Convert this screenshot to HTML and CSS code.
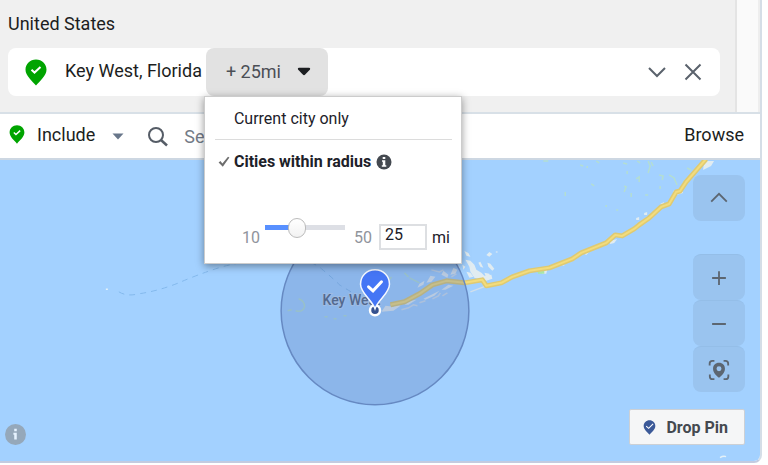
FILE: index.html
```html
<!DOCTYPE html>
<html lang="en">
<head>
<meta charset="utf-8">
<title>Location targeting</title>
<link rel="stylesheet" href="styles.css">
</head>
<body>
<main class="picker">
  <section class="locations">
    <div class="locations-list">
      <h2 class="country">United States</h2>
      <div class="location">
        <svg class="location-pin" viewBox="0 0 22 27" aria-hidden="true"><path fill="#00a400" d="M11 .5C5 .5.5 5 .5 10.700c0 6 6.500 11 10.500 15.800 4-4.800 10.500-9.800 10.500-15.800C21.500 5 17 .5 11 .5z"/><path class="tick" d="M6.500 10.800l3 2.800 6-5.600"/></svg>
        <span class="location-name">Key West, Florida</span>
        <div class="radius">
          <button class="radius-button" type="button" aria-expanded="true">+ 25mi
            <svg class="radius-caret" viewBox="0 0 14 9" aria-hidden="true"><path d="M2 .8h10c1.200 0 1.500 1.200.8 2L8.200 7.600c-.7.700-1.700.7-2.400 0L1.200 2.800C.5 2 .8.800 2 .8z"/></svg>
          </button>
          <div class="menu">
            <button class="menu-item" type="button">Current city only</button>
            <div class="menu-item menu-selected">
              <svg class="menu-tick" viewBox="0 0 12 12" aria-hidden="true"><path d="M.6 6.400L2.400 5l2 2.600L10 .8l1.400.8-6.600 9.200z"/></svg>
              <span>Cities within radius</span>
              <svg class="menu-info" viewBox="0 0 16 16" aria-hidden="true"><circle cx="8" cy="8" r="7.500" fill="#444950"/><path fill="#fff" d="M6.700 3h2.600v2H6.700zM6 6.300h3.300v5h1v1.500H5.800v-1.500h1V7.800H6z"/></svg>
            </div>
            <div class="range">
              <span class="range-end">10</span>
              <input class="slider" type="range" min="10" max="50" value="25" aria-label="Radius">
              <span class="range-end range-max">50</span>
              <input class="range-value" id="miles" type="text" value="25">
              <label class="range-unit" for="miles">mi</label>
            </div>
          </div>
        </div>
        <div class="location-actions">
          <button class="icon-button" type="button" aria-label="Expand"><svg viewBox="0 0 20 20"><path d="M2 6l8 8 8-8"/></svg></button>
          <button class="icon-button" type="button" aria-label="Remove"><svg viewBox="0 0 20 20"><path d="M2.500 2.500l15 15M17.500 2.500l-15 15"/></svg></button>
        </div>
      </div>
    </div>
    <div class="gutter"></div>
  </section>

  <section class="search">
    <button class="include" type="button">
      <svg class="include-pin" viewBox="0 0 22 27" aria-hidden="true"><path fill="#00a400" d="M11 .5C5 .5.5 5 .5 10.700c0 6 6.500 11 10.500 15.800 4-4.800 10.500-9.800 10.500-15.800C21.500 5 17 .5 11 .5z"/><path class="tick" d="M6.500 10.800l3 2.800 6-5.600"/></svg>
      Include
      <svg class="include-caret" viewBox="0 0 12 7" aria-hidden="true"><path d="M.5.500h11L6 6.500z"/></svg>
    </button>
    <svg class="lens" viewBox="0 0 22 22" aria-hidden="true"><circle cx="9" cy="9" r="7"/><path stroke-width="2.500" d="M14 14l6 5.500"/></svg>
    <input class="search-box" type="text" placeholder="Search locations" aria-label="Search locations">
    <a class="browse" href="#">Browse</a>
  </section>

  <section class="map">
    <svg class="map-art" viewBox="0 159 761 303" preserveAspectRatio="xMinYMin slice" role="img" aria-label="Map of Key West">
      <path class="ferry" d="M119 291q8 5 20 2 20-3 40-11 18-8 43-16 40-10 67-8 25 2 33 10 12 10 18 16 8 5 15 9"/>
      <path class="speck" d="M106 288.500h2M721 457q3-2 6-1"/>
      <g class="sand">
        <path d="M465 250l4 2 2 4-4-1zM466 259l5 1 4 4 2 5 5 3 3 3 7-1 1 4-6 2-5-1-7-2-4-6-1-5zM487 254l3-3 3 2-3 3zM488 262l3 1 4 5-2 2-4-4zM479 262l2-1 3 6-3-1zM463 264l3 2-2 3zM467 271l4 1 3 4-4 1zM485 272l5 1 1 3-4 1zM496 251l2-1v2zM454 267l4 2-2 4-5 1zM444 270l5 4-1 3-6-3zM431 275l5 1-4 5-5 1zM420 283l5-3-1 4-6 3z"/>
        <path d="M386 305l8 1 3-3 4 2-7 5-12 1zM405 304l6-4 6-1-8 5zM424 298l8-4 8-4-5 5-9 4zM442 289l7-5 5 1-8 4z"/>
        <path d="M542 270l6-1-1 4h-4zM560 264l5-2v3zM584 252l6-1-3 3zM610 240l8-2-3 4-4 1zM637 217l3-1v3h-3zM645 212l3-1v3h-3zM674 190l8-2 2 4-7 2zM661 203l4-2-1 4zM705 160h10l-3 5-8 4z"/>
      </g>
      <path class="sand-lines" d="M402 309l7-2 5-3 4 1M420 302l6-2M433 298l6-3 2-3M443 295l5-3M375 279l3-2M432 269l8 2 4-2M452 276l5-3M457 263l3 4M471 291l16-6"/>
      <g class="reef">
        <path d="M299 298q6 2 6 8-2 6-9 4M288 310l4-1M325 316h3M334 318h3M344 315h3M385 287l-8 8M390 279l2-3M405 272l4 4M410 277l10 5"/>
        <path d="M544 160h5M566 191v4M581 164l3 1M588 165v2M597 160l3 2M592 183l3 2M624 162l4 1M628 170v3M638 160l3 2M649 160l2 5-2 7M652 161l2 4M637 178l3-2v5M625 185l2 1-2 5M632 192v4M646 194h3M660 174l4 1-1 4M670 174l5 3 3 7M661 185v3M688 167l4 2M684 180l2 2M694 179l4 1M607 204v2M617 209h2"/>
      </g>
      <path fill="#a9e6a8" d="M538 271l7-1v3h-6z"/>
      <path class="road-edge" d="M391 304l14-3 15-8 13-9 14-4 18 2 18-3 4 6 15-3 11-6 17-6 20-3 23-9 9-6 25-10 9-8 7 1 12-7 5-4 10-7 12-11 8-3 7-12 4-1 6-9 20-23"/>
      <path class="road" d="M391 304l14-3 15-8 13-9 14-4 18 2 18-3 4 6 15-3 11-6 17-6 20-3 23-9 9-6 25-10 9-8 7 1 12-7 5-4 10-7 12-11 8-3 7-12 4-1 6-9 20-23"/>
      <text class="place" x="323" y="304">Key West</text>
      <circle class="reach" cx="375.500" cy="310" r="94"/>
      <circle cx="375.500" cy="309.500" r="5" fill="#35518f" stroke="#fff" stroke-width="2.500"/>
      <path fill="#4576f5" stroke="#f4f8ff" stroke-width="1.500" d="M375.500 269c-8.500 0-14.500 6.500-14.500 14.500 0 9 11 15 14.500 24.500C379 298.500 390 292.500 390 283.500c0-8-6-14.500-14.500-14.500z"/>
      <path class="pin-tick" d="M369 286l4.500 4 8.500-9"/>
    </svg>
    <button class="map-info" type="button" aria-label="Map information"><svg viewBox="0 0 20 20"><circle cx="10" cy="10" r="10" fill="#95a8ba"/><path fill="#e6f3ff" d="M8.800 4.600h2.400v2.300H8.800zM8 8.300h3.200v6.500H8.800v-4.600H8z"/></svg></button>
    <div class="map-tools">
      <button class="map-button map-up" type="button" aria-label="Collapse map"><svg viewBox="0 0 24 24"><path d="M3.500 16L12 7.500l8.500 8.500"/></svg></button>
      <button class="map-button" type="button" aria-label="Zoom in"><svg viewBox="0 0 24 24"><path d="M4.500 12h15M12 4.500v15"/></svg></button>
      <button class="map-button" type="button" aria-label="Zoom out"><svg viewBox="0 0 24 24"><path d="M4.500 12h15"/></svg></button>
      <button class="map-button" type="button" aria-label="Locate"><svg viewBox="0 0 24 24"><path class="frame" d="M1.800 7V5q0-3 3-3H7M17 2h2q3 0 3 3v2M22.200 17v2q0 3-3 3H17M7 22H5q-3 0-3-3v-2"/><path class="marker" fill-rule="evenodd" d="M12 4c-4 0-6.500 2.800-6.500 6.500C5.500 15 9 18 12 20.500c3-2.500 6.500-5.500 6.500-10C18.500 6.800 16 4 12 4zm0 4a2.700 2.700 0 1 1 0 5.400A2.700 2.700 0 0 1 12 8z"/></svg></button>
      <button class="drop-pin" type="button"><svg class="drop-icon" viewBox="0 0 22 27" aria-hidden="true"><path fill="#3b5998" d="M11 .5C5 .5.5 5 .5 10.700c0 6 6.500 11 10.500 15.800 4-4.800 10.500-9.800 10.500-15.800C21.500 5 17 .5 11 .5z"/><path class="tick" d="M5 11l4.500 4 8-8"/></svg>Drop Pin</button>
    </div>
  </section>
</main>
</body>
</html>
```
FILE: styles.css
```css
* { box-sizing: border-box; }

body {
  margin: 0;
  background: #fff;
  color: #1c1e21;
  font-family: Roboto, "Liberation Sans", sans-serif;
  font-size: 18px;
}

button, input {
  margin: 0;
  padding: 0;
  border: 0;
  background: none;
  color: inherit;
  font: inherit;
}

svg { display: block; }

.tick {
  fill: none;
  stroke: #fff;
  stroke-width: 2;
}

.picker {
  display: flex;
  flex-direction: column;
  min-height: calc(100vh - 2px);
  margin-right: 6px;
  border-right: 2px solid #d5dee7;
  border-bottom: 2px solid #c3cbe0;
  border-radius: 0 0 8px 0;
}

.locations {
  display: flex;
  border-bottom: 2px solid #d8e0e7;
}

.locations-list {
  flex: 1;
  padding: 12px 15px 16px 8px;
  background: #f0f0f0;
}

.gutter {
  width: 25px;
  border-left: 2px solid #e4e4e4;
  border-right: 2px solid #eee;
  background: #fafafa;
}

.country {
  margin: 0 0 12px;
  font-size: 18px;
  font-weight: 400;
  line-height: 24px;
}

.location {
  display: flex;
  align-items: center;
  height: 48px;
  padding-left: 17px;
  border-radius: 8px;
  background: #fff;
}

.location-pin {
  width: 22px;
  height: 27px;
}

.location-name {
  padding: 0 4px 3px 18px;
  white-space: nowrap;
}

.radius { position: relative; }

.radius-button {
  display: flex;
  align-items: center;
  gap: 16px;
  height: 48px;
  padding: 0 17px 1px 20px;
  border-radius: 8px;
  background: #e2e2e2;
  color: #4b4f56;
  white-space: nowrap;
}

.radius-caret {
  width: 14px;
  height: 9px;
  fill: #1c1e21;
}

.menu {
  position: absolute;
  z-index: 2;
  top: 48px;
  left: -2px;
  width: 258px;
  height: 168px;
  padding: 0 9px 0 10px;
  border: 1px solid #ccc;
  background: #fff;
  box-shadow: 0 2px 8px rgba(0, 0, 0, .4);
  color: #1d2129;
  font-size: 16px;
}

.menu-item {
  display: flex;
  align-items: center;
  width: 100%;
  height: 43px;
  padding-left: 19px;
  border-bottom: 1px solid #dcdcdc;
}

.menu-selected {
  padding-left: 3px;
  border-bottom: 0;
  font-weight: 700;
  white-space: nowrap;
}

.menu-tick {
  width: 12px;
  height: 12px;
  margin-right: 4px;
  fill: #6d6d6d;
}

.menu-info {
  width: 16px;
  height: 16px;
  margin-left: 5px;
}

.range {
  display: flex;
  align-items: flex-end;
  margin-top: 34px;
  padding-left: 27px;
  line-height: 24px;
}

.range-end { color: #90949c; }

.slider {
  appearance: none;
  width: 80px;
  height: 20px;
  margin: 0 9px 13px 5px;
}

.slider::-webkit-slider-runnable-track {
  height: 5px;
  background: linear-gradient(to right, #5890ff 40%, #dddfe5 40%);
}

.slider::-webkit-slider-thumb {
  appearance: none;
  width: 18px;
  height: 20px;
  margin-top: -7px;
  border: 1px solid #bbb;
  border-radius: 9px;
  background: linear-gradient(#fff, #f2f2f2);
}

.range-value {
  width: 48px;
  height: 26px;
  margin: 0 5px 0 7px;
  padding: 0 4px 6px;
  border: 2px solid #dddfe2;
}

.location-actions {
  display: flex;
  gap: 16px;
  margin-left: auto;
  padding-right: 17px;
}

.icon-button svg {
  width: 20px;
  height: 20px;
  fill: none;
  stroke: #5a626c;
  stroke-width: 2;
}

.search {
  display: flex;
  align-items: center;
  height: 46px;
  padding: 0 16px 3px 8px;
  border-bottom: 2px solid #cdd7e2;
}

.include {
  display: flex;
  align-items: center;
}

.include-pin {
  width: 18px;
  height: 19px;
  margin-right: 11px;
}

.include-caret {
  width: 12px;
  height: 7px;
  margin: 3px 0 0 17px;
  fill: #68768a;
}

.lens {
  width: 22px;
  height: 22px;
  margin: 4px 15px 0 23px;
  fill: none;
  stroke: #555c66;
  stroke-width: 2;
}

.search-box {
  flex: 1;
  min-width: 0;
  padding-top: 4px;
}

.search-box::placeholder {
  color: #737b87;
  opacity: 1;
}

.browse {
  color: inherit;
  text-decoration: none;
}

.map {
  position: relative;
  display: flex;
  flex: 1;
  align-items: flex-end;
  justify-content: space-between;
  padding: 15px 15px 16px 5px;
  border-radius: 0 0 6px 0;
  background: #a3d1ff;
  overflow: hidden;
}

.map-art {
  position: absolute;
  inset: 0;
  width: 100%;
  height: 100%;
}

.ferry {
  fill: none;
  stroke: #84b9ec;
  stroke-dasharray: 6 5;
}

.speck {
  fill: none;
  stroke: #e4f1f8;
  stroke-width: 1.5;
}

.sand { fill: #e1ecf1; }

.sand-lines {
  fill: none;
  stroke: #d0dfec;
  stroke-width: 1.5;
}

.reef {
  fill: none;
  stroke: #b4ded2;
  stroke-width: 1.5;
}

.road-edge {
  fill: none;
  stroke: #dfca72;
  stroke-width: 5;
  stroke-linejoin: round;
}

.road {
  fill: none;
  stroke: #f3dc7c;
  stroke-width: 2;
  stroke-linejoin: round;
}

.place {
  fill: #556782;
  stroke: #bcd7f5;
  stroke-width: 2;
  paint-order: stroke;
  font-size: 14px;
  font-weight: 500;
}

.reach {
  fill: rgba(78, 111, 177, .27);
  stroke: #6689c2;
  stroke-width: 1.5;
}

.pin-tick {
  fill: none;
  stroke: #fff;
  stroke-width: 3;
  stroke-linecap: round;
}

.map-info {
  position: relative;
}

.map-info svg {
  width: 21px;
  height: 21px;
}

.map-tools {
  position: relative;
  display: flex;
  flex-direction: column;
  align-items: flex-end;
}

.map-button {
  display: grid;
  place-items: center;
  width: 52px;
  height: 46px;
  border-radius: 8px;
  background: #9ac4ef;
}

.map-button + .map-button {
  border-top: 1px solid #94bee8;
}

.map-up { margin-bottom: 33px; }

.map-button svg {
  width: 22px;
  height: 22px;
  fill: none;
  stroke: #5c6671;
  stroke-width: 2;
}

.map-button .marker {
  fill: #5c6671;
  stroke: none;
}

.drop-pin {
  display: flex;
  align-items: center;
  height: 36px;
  margin-top: 17px;
  padding: 0 16px 0 13px;
  border: 1px solid #ccd0d5;
  border-radius: 2px;
  background: #f5f6f7;
  color: #444950;
  font-size: 16px;
  font-weight: 700;
}

.drop-icon {
  width: 13px;
  height: 15px;
  margin-right: 10px;
}
```
